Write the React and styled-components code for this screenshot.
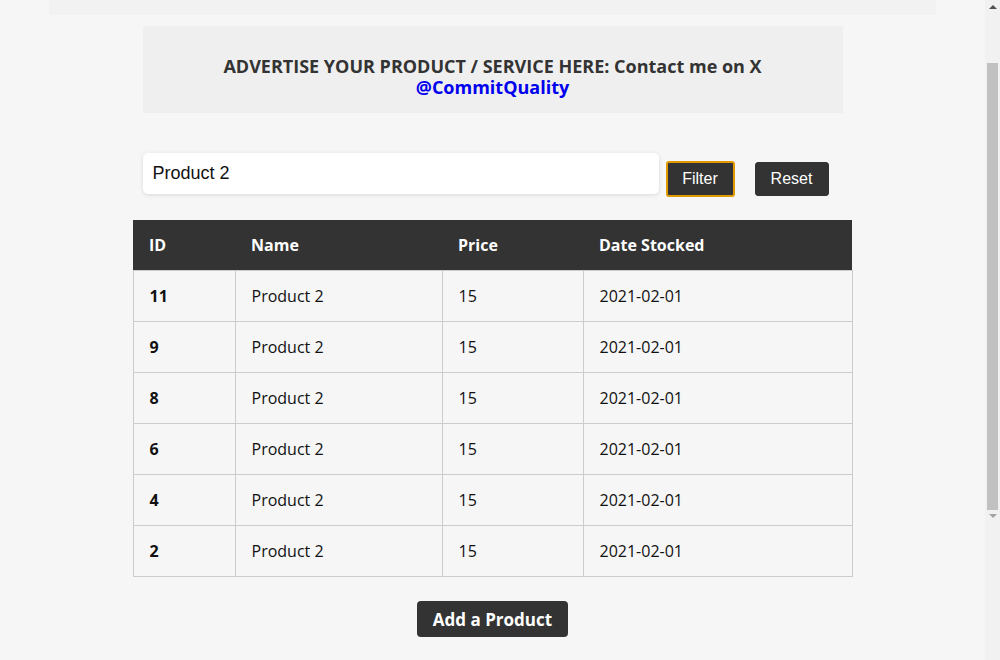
import { useState } from "react";
import styled, { createGlobalStyle } from "styled-components";

const GlobalStyle = createGlobalStyle`
body {
  margin: 0;
  background-color: #f6f6f6;
  font-family: "Open Sans", "Noto Sans", sans-serif;
  color: #111;
}
`

const Viewport = styled.div`
display: flex;
height: 660px;
overflow: hidden;
`

const Page = styled.div`
flex: 1;
display: flex;
flex-direction: column;
align-items: center;
`

const ScrollTrack = styled.div`
width: 15px;
display: flex;
flex-direction: column;
align-items: center;
background-color: #f1f1f1;
`

const Arrow = styled.div`
width: 0;
height: 0;
margin: ${p => p.$up ? '5px 0 0' : '4px 0 0'};
border-left: 4px solid transparent;
border-right: 4px solid transparent;
border-bottom: ${p => p.$up ? '4px solid #505050' : 'none'};
border-top: ${p => p.$up ? 'none' : '4px solid #a3a3a3'};
`

const Thumb = styled.div`
width: 11px;
height: 447px;
margin-top: 54px;
background-color: #c1c1c1;
`

const TopBar = styled.div`
width: 90%;
height: 15px;
background-color: #f2f2f2;
`

const AdBox = styled.div`
width: 700px;
height: 87px;
box-sizing: border-box;
margin-top: 11px;
padding-top: 30px;
background-color: #efefef;
text-align: center;
font-size: 18px;
font-weight: 700;
line-height: 21px;
color: #333;
`

const AdLink = styled.a`
color: #0000ee;
text-decoration: none;
`

const FilterRow = styled.div`
display: flex;
align-items: flex-start;
margin-top: 40px;
margin-right: 14px;
`

const SearchInput = styled.input`
flex-shrink: 0;
width: 516px;
height: 41px;
box-sizing: border-box;
padding: 0 10px;
border: none;
border-radius: 5px;
background: #fff;
box-shadow: 0 1px 4px rgba(0, 0, 0, 0.12);
font-family: "Liberation Sans", Arial, sans-serif;
font-size: 18px;
color: #111;
outline: none;
`

const SmallButton = styled.button`
flex-shrink: 0;
width: ${p => p.$active ? '69px' : '74px'};
height: ${p => p.$active ? '36px' : '34px'};
margin-top: ${p => p.$active ? '8px' : '9px'};
margin-left: ${p => p.$gap}px;
padding: 0;
background-color: #333;
color: #fff;
border: ${p => p.$active ? '2px solid #e09b00' : '1px solid #333'};
border-radius: 3px;
font-family: "Liberation Sans", Arial, sans-serif;
font-size: 16px;
cursor: pointer;
`

const Table = styled.table`
width: 719px;
margin-top: 23px;
border-collapse: collapse;
table-layout: fixed;
`

const HeadCell = styled.th`
height: 50px;
padding: 0 16px;
background-color: #333;
color: #fff;
text-align: left;
font-size: 16px;
font-weight: 700;
`

const Cell = styled.td`
height: 50px;
padding: 0 16px;
border: 1px solid #cccccc;
font-size: 16px;
font-weight: ${p => p.$bold ? 700 : 400};
color: #111;
`

const AddButton = styled.button`
margin-top: 24px;
height: 36px;
padding: 0 16px;
background-color: #333;
color: #fff;
border: none;
border-radius: 4px;
font-family: "Open Sans", "Noto Sans", sans-serif;
font-size: 17px;
font-weight: 700;
cursor: pointer;
`

const products = [
    { id: 11, name: 'Product 2', price: 15, date: '2021-02-01' },
    { id: 9, name: 'Product 2', price: 15, date: '2021-02-01' },
    { id: 8, name: 'Product 2', price: 15, date: '2021-02-01' },
    { id: 6, name: 'Product 2', price: 15, date: '2021-02-01' },
    { id: 4, name: 'Product 2', price: 15, date: '2021-02-01' },
    { id: 2, name: 'Product 2', price: 15, date: '2021-02-01' },
]

export default function App() {

    const [search, setSearch] = useState('Product 2');

    return (
        <Viewport>
            <GlobalStyle />
            <Page>
                <TopBar />
                <AdBox>
                    ADVERTISE YOUR PRODUCT / SERVICE HERE: Contact me on X<br />
                    <AdLink href="#">@CommitQuality</AdLink>
                </AdBox>
                <FilterRow>
                    <SearchInput value={search} onChange={(e) => setSearch(e.target.value)} />
                    <SmallButton $active $gap={7}>Filter</SmallButton>
                    <SmallButton $gap={20}>Reset</SmallButton>
                </FilterRow>
                <Table>
                    <colgroup>
                        <col style={{ width: 102 }} />
                        <col style={{ width: 207 }} />
                        <col style={{ width: 141 }} />
                        <col style={{ width: 269 }} />
                    </colgroup>
                    <thead>
                        <tr>
                            <HeadCell>ID</HeadCell>
                            <HeadCell>Name</HeadCell>
                            <HeadCell>Price</HeadCell>
                            <HeadCell>Date Stocked</HeadCell>
                        </tr>
                    </thead>
                    <tbody>
                        {products.map((p) => (
                            <tr key={p.id}>
                                <Cell $bold>{p.id}</Cell>
                                <Cell>{p.name}</Cell>
                                <Cell>{p.price}</Cell>
                                <Cell>{p.date}</Cell>
                            </tr>
                        ))}
                    </tbody>
                </Table>
                <AddButton>Add a Product</AddButton>
            </Page>
            {/* fake browser scrollbar, page is scrolled a bit */}
            <ScrollTrack>
                <Arrow $up />
                <Thumb />
                <Arrow />
            </ScrollTrack>
        </Viewport>
    )
}
